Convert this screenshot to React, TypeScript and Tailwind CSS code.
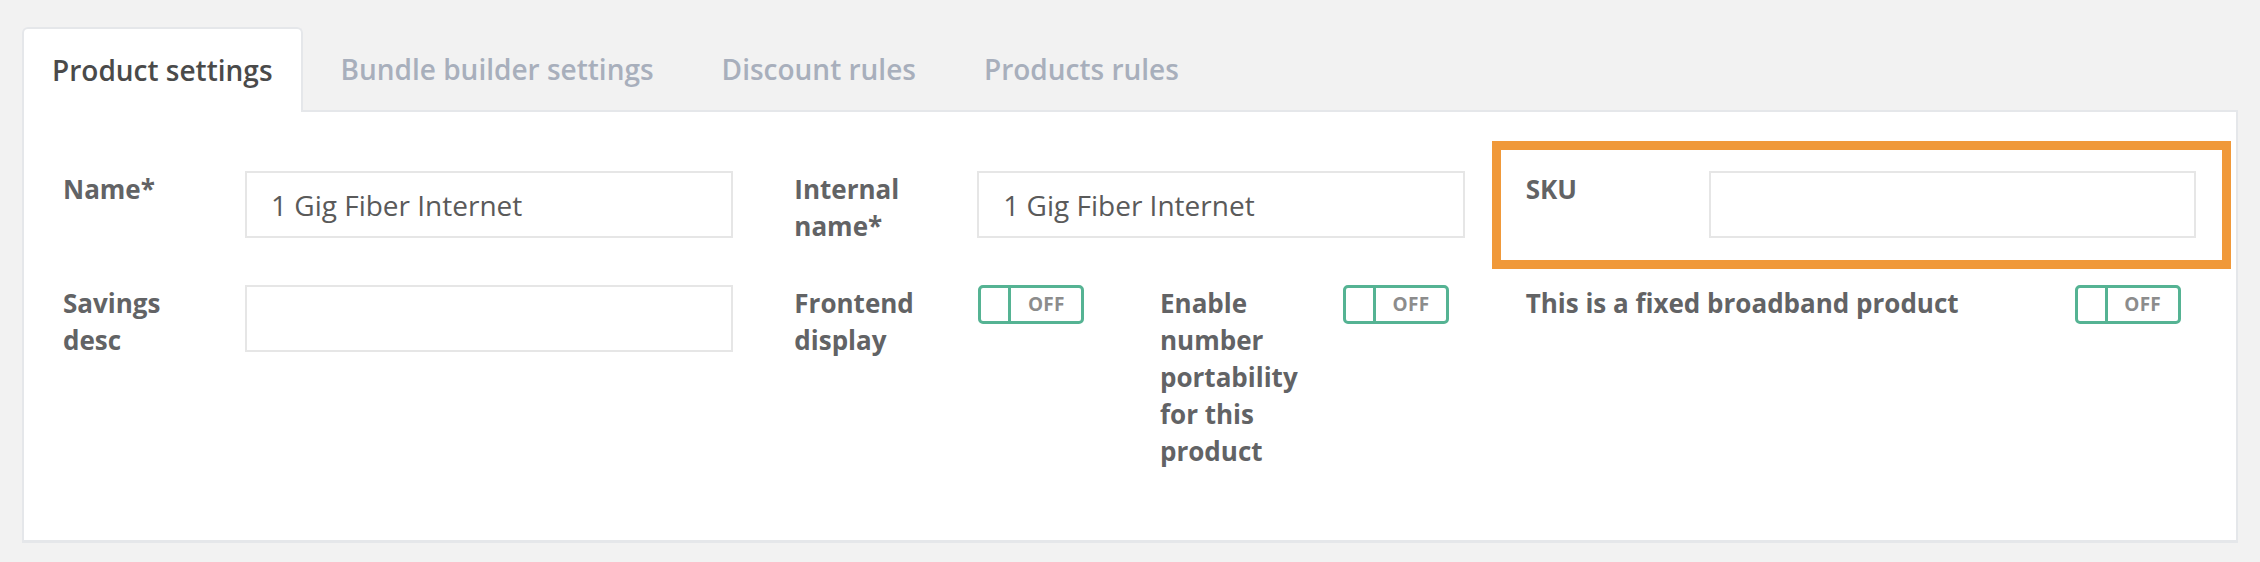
import React from "react";

function Toggle() {
  return (
    <div className="flex h-[39px] w-[106px] overflow-hidden rounded-[5px] border-[3px] border-[#55b393] bg-white">
      <div className="w-[30px] border-r-[3px] border-[#55b393]" />
      <div className="flex flex-1 items-center justify-center text-[19px] font-bold tracking-[0.3px] text-[#8c8c8c]">
        OFF
      </div>
    </div>
  );
}

function Label({ children, className = "" }: { children: React.ReactNode; className?: string }) {
  return (
    <div className={`shrink-0 pr-[28px] text-[26px] font-bold leading-[37px] text-[#626365] ${className}`}>
      {children}
    </div>
  );
}

function TextInput({ value = "" }: { value?: string }) {
  return (
    <input
      readOnly
      defaultValue={value}
      className="h-[67px] min-w-0 flex-1 border-2 border-[#e6e6e6] bg-white pl-[24px] text-[28px] text-[#5a5a5a] outline-none"
    />
  );
}

export default function App() {
  const tabs = ["Product settings", "Bundle builder settings", "Discount rules", "Products rules"];
  return (
    <div className="min-h-[562px] bg-[#f2f2f2] px-[22px] pt-[27px] font-['Open_Sans',sans-serif]">
      <div className="relative z-10 -mb-[2px] flex items-end gap-[8px]">
        {tabs.map((t, i) =>
          i === 0 ? (
            <div
              key={t}
              className="flex h-[85px] items-center rounded-t-[6px] border-2 border-b-0 border-[#e5e7ea] bg-white px-[28px] pb-[2px] text-[28px] font-semibold text-[#4a4a4a]"
            >
              {t}
            </div>
          ) : (
            <div
              key={t}
              className="flex h-[85px] items-center border-2 border-transparent px-[28px] pb-[2px] text-[28px] font-semibold text-[#a8afbc]"
            >
              {t}
            </div>
          )
        )}
      </div>
      <div className="border-2 border-b-[3px] border-[#e5e7ea] bg-white pb-[70px] pl-[39px] pr-[40px] pt-[59px]">
        <div className="grid grid-cols-6 items-start gap-x-[61px] gap-y-[40px]">
          <div className="col-span-2 flex items-start">
            <Label className="w-[182px]">Name*</Label>
            <TextInput value="1 Gig Fiber Internet" />
          </div>
          <div className="col-span-2 flex items-start">
            <Label className="w-[183px]">Internal name*</Label>
            <TextInput value="1 Gig Fiber Internet" />
          </div>
          <div className="relative col-span-2 flex items-start">
            <Label className="w-[183px]">SKU</Label>
            <TextInput />
            <div className="pointer-events-none absolute -left-[34px] -right-[35px] -top-[30px] h-[128px] border-[9px] border-[#f0993a]" />
          </div>

          <div className="col-span-2 flex items-start">
            <Label className="w-[182px]">Savings desc</Label>
            <TextInput />
          </div>
          <div className="col-span-1 flex items-start">
            <Label className="w-[184px]">Frontend display</Label>
            <Toggle />
          </div>
          <div className="col-span-1 flex items-start">
            <Label className="w-[183px]">Enable number portability for this product</Label>
            <Toggle />
          </div>
          <div className="col-span-2 flex items-start">
            <Label className="w-[549px]">This is a fixed broadband product</Label>
            <Toggle />
          </div>
        </div>
      </div>
    </div>
  );
}
